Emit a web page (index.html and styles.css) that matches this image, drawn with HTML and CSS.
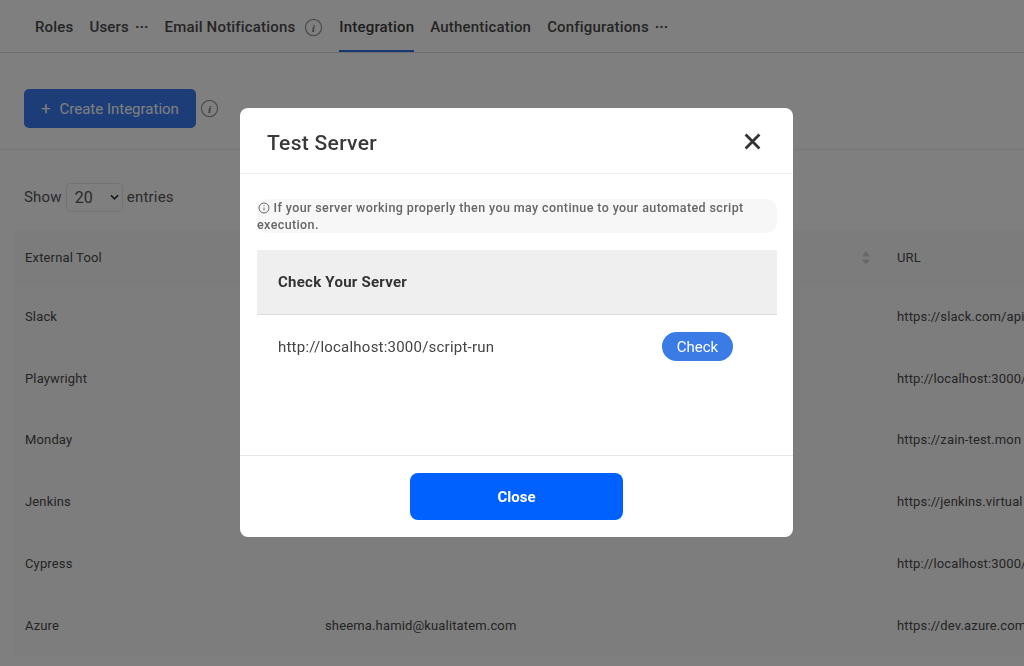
FILE: index.html
```html
<!DOCTYPE html>
<html lang="en">
<head>
<meta charset="utf-8">
<title>Integration</title>
<link rel="stylesheet" href="styles.css">
</head>
<body>
<div class="page">
  <nav class="tabs">
    <a class="tab">Roles</a>
    <a class="tab">Users<span class="dots">···</span></a>
    <a class="tab tab-info">Email Notifications<svg class="info" viewBox="0 0 20 20"><circle cx="10" cy="10" r="8.500"/><text x="10" y="14.500" text-anchor="middle">i</text></svg></a>
    <a class="tab active">Integration</a>
    <a class="tab">Authentication</a>
    <a class="tab">Configurations<span class="dots">···</span></a>
  </nav>
  <section class="toolbar">
    <button class="create"><span class="plus">+</span> Create Integration</button>
    <svg class="info" viewBox="0 0 20 20"><circle cx="10" cy="10" r="8.500"/><text x="10" y="14.500" text-anchor="middle">i</text></svg>
  </section>
  <div class="entries">
    <span>Show</span>
    <span class="select">20
      <svg viewBox="0 0 10 6"><path d="M1 1l4 4 4-4"/></svg>
    </span>
    <span>entries</span>
  </div>
  <table class="data">
    <colgroup><col class="c1"><col class="c2"><col class="c3"><col class="c4"></colgroup>
    <thead>
      <tr><th>External Tool</th><th></th><th class="sorted"><svg viewBox="0 0 8 14"><path d="M4 0l4 5.500H0zM4 14l4-5.500H0z"/></svg></th><th>URL</th></tr>
    </thead>
    <tbody>
      <tr><td>Slack</td><td></td><td></td><td>https://slack.com/api</td></tr>
      <tr><td>Playwright</td><td></td><td></td><td>http://localhost:3000/</td></tr>
      <tr><td>Monday</td><td></td><td></td><td>https://zain-test.mon</td></tr>
      <tr><td>Jenkins</td><td></td><td></td><td>https://jenkins.virtual</td></tr>
      <tr><td>Cypress</td><td></td><td></td><td>http://localhost:3000/</td></tr>
      <tr><td>Azure</td><td>sheema.hamid@kualitatem.com</td><td></td><td>https://dev.azure.com/</td></tr>
    </tbody>
  </table>
</div>
<div class="backdrop"></div>
<div class="modal">
  <header class="modal-head">
    <h2>Test Server</h2>
    <svg class="x" viewBox="0 0 16 16"><path d="M1.500 1.500l13 13M14.500 1.500l-13 13"/></svg>
  </header>
  <div class="modal-body">
    <p class="note"><svg viewBox="0 0 12 12"><circle cx="6" cy="6" r="5"/><path d="M6 5.500v3M6 3.300v1"/></svg> If your server working properly then you may continue to your automated script execution.</p>
    <div class="check-head">Check Your Server</div>
    <div class="check-row">
      <span>http://localhost:3000/script-run</span>
      <button class="check">Check</button>
    </div>
  </div>
  <footer class="modal-foot"><button class="close">Close</button></footer>
</div>
</body>
</html>
```

FILE: styles.css
```css
* { box-sizing: border-box; }
html, body { margin: 0; height: 100%; }
body { width: 1024px; height: 666px; overflow: hidden; background: #fff; font-family: Roboto, "Liberation Sans", sans-serif; color: #333; }
button { font-family: inherit; border: 0; }

.page { width: 1024px; height: 666px; overflow: hidden; }
.tabs { display: flex; align-items: stretch; gap: 16px; height: 53px; padding-left: 35px; border-bottom: 1px solid #ddd; }
.tab { display: flex; align-items: center; gap: 6px; height: 52px; padding-top: 2px; font-size: 15px; font-weight: 500; letter-spacing: .18px; color: #4a4a4a; white-space: nowrap; }
.tab.active { color: #3a3a3a; border-bottom: 2px solid #2f6fe0; padding-top: 4px; }
.tab-info { gap: 9px; }
.dots { font-weight: 700; letter-spacing: 0; }
.info { width: 19px; height: 19px; flex: none; }
.info circle { fill: none; stroke: #999; stroke-width: 1.300; }
.info text { font: italic 700 12px "Liberation Serif", serif; fill: #777; }

.toolbar { display: flex; align-items: center; gap: 4px; height: 97px; padding: 14px 24px 0; border-bottom: 1px solid #eee; }
.create { width: 172px; height: 39px; border-radius: 5px; background: #3a7bf0; color: #fff; font-size: 15px; font-weight: 400; text-align: center; }
.plus { margin-right: 5px; font-size: 17px; }

.entries { display: flex; align-items: center; gap: 4px; height: 30px; margin: 32px 0 18px 24px; font-size: 15px; letter-spacing: .2px; color: #555; }
.select { display: flex; align-items: center; justify-content: space-between; width: 57px; height: 29px; padding: 0 3px 0 8px; border: 1px solid #e6e6e6; border-radius: 4px; font-size: 16px; letter-spacing: 0; }
.select svg { width: 9px; height: 6px; fill: none; stroke: #333; stroke-width: 1.800; }

.data { width: 1200px; margin-left: 14px; border-collapse: collapse; table-layout: fixed; font-size: 13px; letter-spacing: .15px; color: #4a4a4a; background: #fafafa; }
.c1 { width: 300px; } .c2 { width: 300px; } .c3 { width: 272px; } .c4 { width: 328px; }
th { height: 55px; padding: 0 11px; font-weight: 400; text-align: left; background: #f8f8f8; }
td { height: 61.800px; padding: 1px 11px 0; white-space: nowrap; overflow: hidden; }
.sorted { text-align: right; padding-right: 16px; }
.sorted svg { width: 8px; height: 14px; fill: #d0d0d0; display: inline-block; vertical-align: middle; }

.backdrop { position: fixed; inset: 0; background: rgba(0,0,0,.5); }
.modal { position: fixed; left: 240px; top: 108px; width: 553px; height: 429px; display: flex; flex-direction: column; background: #fff; border-radius: 8px; overflow: hidden; }
.modal-head { display: flex; align-items: center; justify-content: space-between; height: 66px; padding: 5px 32px 0 27px; border-bottom: 1px solid #eee; flex: none; }
.modal-head h2 { margin: 0; font-size: 21px; font-weight: 500; letter-spacing: .3px; color: #3a3a3a; }
.x { width: 17px; height: 17px; fill: none; stroke: #333; stroke-width: 2.600; margin-top: -3px; }
.modal-body { flex: 1; padding: 25px 16px 0 17px; }
.note { margin: 0; padding: 0; height: 34px; border-radius: 10px; background: #f7f7f7; font-size: 12.500px; line-height: 17px; font-weight: 500; color: #666; letter-spacing: .39px; }
.note svg { width: 12px; height: 12px; vertical-align: -1.500px; margin-left: 1px; fill: none; stroke: #666; stroke-width: 1; }
.check-head { display: flex; align-items: center; height: 65px; margin-top: 17px; padding-left: 21px; background: #efefef; border-bottom: 1px solid #ddd; font-size: 15px; font-weight: 700; letter-spacing: .25px; color: #333; }
.check-row { display: flex; align-items: center; justify-content: space-between; height: 63px; padding: 0 44px 0 21px; font-size: 15px; letter-spacing: .22px; color: #444; }
.check { width: 71px; height: 29px; border-radius: 15px; background: #3a7be6; color: #fff; font-size: 15px; letter-spacing: 0; }
.modal-foot { display: flex; justify-content: center; align-items: center; height: 82px; border-top: 1px solid #e6e6e6; flex: none; }
.close { width: 213px; height: 47px; border-radius: 8px; background: #0061ff; color: #fff; font-size: 15px; font-weight: 700; }
```
